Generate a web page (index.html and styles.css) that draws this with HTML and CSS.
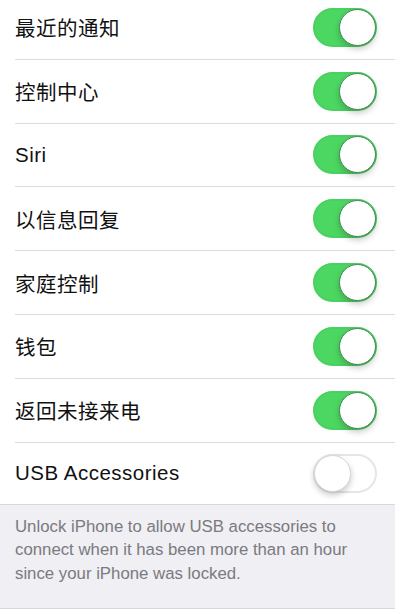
FILE: index.html
```html
<!DOCTYPE html>
<html lang="zh-CN">
<head>
    <meta charset="UTF-8">
    <meta name="viewport" content="width=device-width, initial-scale=1.0">
    <title>锁定时允许访问</title>
    <link rel="stylesheet" href="styles.css">
</head>
<body>
    <div class="screen">
        <ul class="list">
            <li class="row"><span class="label">最近的通知</span><span class="switch on"><span class="knob"></span></span></li>
            <li class="row"><span class="label">控制中心</span><span class="switch on"><span class="knob"></span></span></li>
            <li class="row"><span class="label">Siri</span><span class="switch on"><span class="knob"></span></span></li>
            <li class="row"><span class="label">以信息回复</span><span class="switch on"><span class="knob"></span></span></li>
            <li class="row"><span class="label">家庭控制</span><span class="switch on"><span class="knob"></span></span></li>
            <li class="row"><span class="label">钱包</span><span class="switch on"><span class="knob"></span></span></li>
            <li class="row"><span class="label">返回未接来电</span><span class="switch on"><span class="knob"></span></span></li>
            <li class="row"><span class="label">USB Accessories</span><span class="switch"><span class="knob"></span></span></li>
        </ul>
        <div class="footer">
            Unlock iPhone to allow USB accessories to connect when it has been more than an hour since your iPhone was locked.
        </div>
    </div>
</body>
</html>
```

FILE: styles.css
```css
body {
    margin: 0;
    padding: 0;
    background-color: #fff;
    font-family: "Liberation Sans", "Noto Sans CJK SC", sans-serif;
    color: #111;
    overflow: hidden;
}
.screen {
    width: 395px;
}
.list {
    list-style: none;
    margin: -4px 0 0 0;
    padding: 0;
    background-color: #fff;
}
.row {
    display: flex;
    align-items: center;
    justify-content: space-between;
    height: 62.8px;
    margin-left: 15px;
    padding-right: 18px;
    border-bottom: 1px solid #dcdcde;
}
.row:last-child {
    border-bottom: none;
    height: 61px;
}
.label {
    font-size: 20.5px;
    letter-spacing: 0.5px;
}
.switch {
    position: relative;
    box-sizing: border-box;
    width: 64px;
    height: 39px;
    border-radius: 20px;
    background-color: #fff;
    border: 2px solid #e6e6e8;
}
.switch.on {
    background-color: #4cd763;
    border-color: #4ad060;
}
.knob {
    position: absolute;
    top: -1px;
    left: -1px;
    width: 37px;
    height: 37px;
    border-radius: 50%;
    background-color: #fff;
    box-sizing: border-box;
    border: 1px solid #d6d6d6;
    box-shadow: 0 3px 6px rgba(0, 0, 0, 0.22);
}
.switch.on .knob {
    left: auto;
    right: -1px;
    border-color: #3f8a4f;
}
.footer {
    box-sizing: border-box;
    height: 105px;
    padding: 10px 30px 0 15px;
    background-color: #efeff4;
    border-top: 1px solid #d8d8dc;
    border-bottom: 1px solid #d8d8dc;
    font-size: 16.8px;
    line-height: 23.5px;
    color: #7a7a7f;
}
```
